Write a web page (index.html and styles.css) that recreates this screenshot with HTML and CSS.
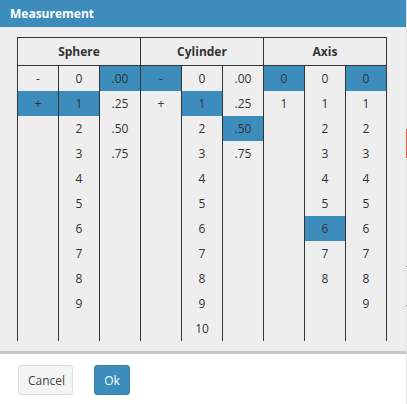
FILE: index.html
```html
<!DOCTYPE html>
<html>
<head>
<meta charset="utf-8">
<link rel="stylesheet" href="styles.css">
</head>
<body>
<div class="page">
  <div class="modal">
    <div class="modal-header">Measurement</div>
    <div class="modal-body">
      <div class="picker">
        <div class="heads">
          <div class="head">Sphere</div>
          <div class="head">Cylinder</div>
          <div class="head">Axis</div>
        </div>
        <div class="cols">
          <div class="col"><div class="cell">-</div><div class="cell sel">+</div></div>
          <div class="col"><div class="cell">0</div><div class="cell sel">1</div><div class="cell">2</div><div class="cell">3</div><div class="cell">4</div><div class="cell">5</div><div class="cell">6</div><div class="cell">7</div><div class="cell">8</div><div class="cell">9</div></div>
          <div class="col"><div class="cell sel">.00</div><div class="cell">.25</div><div class="cell">.50</div><div class="cell">.75</div></div>
          <div class="col"><div class="cell sel">-</div><div class="cell">+</div></div>
          <div class="col"><div class="cell">0</div><div class="cell sel">1</div><div class="cell">2</div><div class="cell">3</div><div class="cell">4</div><div class="cell">5</div><div class="cell">6</div><div class="cell">7</div><div class="cell">8</div><div class="cell">9</div><div class="cell">10</div></div>
          <div class="col"><div class="cell">.00</div><div class="cell">.25</div><div class="cell sel">.50</div><div class="cell">.75</div></div>
          <div class="col"><div class="cell sel">0</div><div class="cell">1</div></div>
          <div class="col"><div class="cell">0</div><div class="cell">1</div><div class="cell">2</div><div class="cell">3</div><div class="cell">4</div><div class="cell">5</div><div class="cell sel">6</div><div class="cell">7</div><div class="cell">8</div></div>
          <div class="col"><div class="cell sel">0</div><div class="cell">1</div><div class="cell">2</div><div class="cell">3</div><div class="cell">4</div><div class="cell">5</div><div class="cell">6</div><div class="cell">7</div><div class="cell">8</div><div class="cell">9</div></div>
        </div>
      </div>
    </div>
    <div class="modal-footer">
      <button class="btn btn-default">Cancel</button>
      <button class="btn btn-primary">Ok</button>
    </div>
  </div>
  <div class="aside">
    <div class="mark"></div>
    <div class="tick t1"></div>
    <div class="tick t2"></div>
  </div>
</div>
</body>
</html>
```

FILE: styles.css
```css
html, body {
  margin: 0;
  padding: 0;
}
body {
  font-family: "Open Sans", "Liberation Sans", sans-serif;
  font-size: 12px;
  color: #333;
  background: #e6e6e6;
}
.page {
  display: flex;
  width: 407px;
  height: 404px;
}
.modal {
  width: 406px;
  flex: none;
  display: flex;
  flex-direction: column;
}
.modal-header {
  height: 27px;
  line-height: 27px;
  background: #3c8dbc;
  color: #fff;
  font-weight: 700;
  font-size: 12px;
  padding-left: 10px;
}
.modal-body {
  background: #eeeeee;
  padding: 10px 0 10px 17px;
  height: 304px;
  border-bottom: 3px solid #c6c6c6;
}
.picker {
  width: 370px;
}
.heads {
  display: flex;
  border: 1px solid #333;
  border-right: none;
}
.head {
  width: 122px;
  height: 27px;
  line-height: 27px;
  text-align: center;
  font-weight: 700;
  border-right: 1px solid #333;
}
.cols {
  display: flex;
  border-left: 1px solid #333;
  height: 275px;
}
.col {
  width: 40px;
  border-right: 1px solid #333;
}
.cell {
  height: 25px;
  line-height: 25px;
  text-align: center;
}
.cell.sel {
  background: #3c8dbc;
}
.modal-footer {
  flex: 1;
  background: #fff;
  display: flex;
  align-items: flex-start;
  gap: 21px;
  padding: 11px 0 0 18px;
}
.btn {
  height: 30px;
  padding: 0 9px;
  border-radius: 3px;
  font-family: "Open Sans", "Liberation Sans", sans-serif;
  font-size: 12px;
  cursor: pointer;
}
.btn-default {
  width: 55px;
  background: #f4f4f4;
  border: 1px solid #ddd;
  color: #444;
}
.btn-primary {
  width: 36px;
  background: #3c8dbc;
  border: 1px solid #367fa9;
  color: #fff;
}
.aside {
  width: 1px;
  background: #e4e4e4;
  position: relative;
}
.mark {
  position: absolute;
  top: 129px;
  left: 0;
  width: 1px;
  height: 29px;
  background: #d9534f;
}
.tick {
  position: absolute;
  left: 0;
  width: 1px;
  height: 1px;
  background: #777;
}
.t1 { top: 266px; }
.t2 { top: 305px; }
```
